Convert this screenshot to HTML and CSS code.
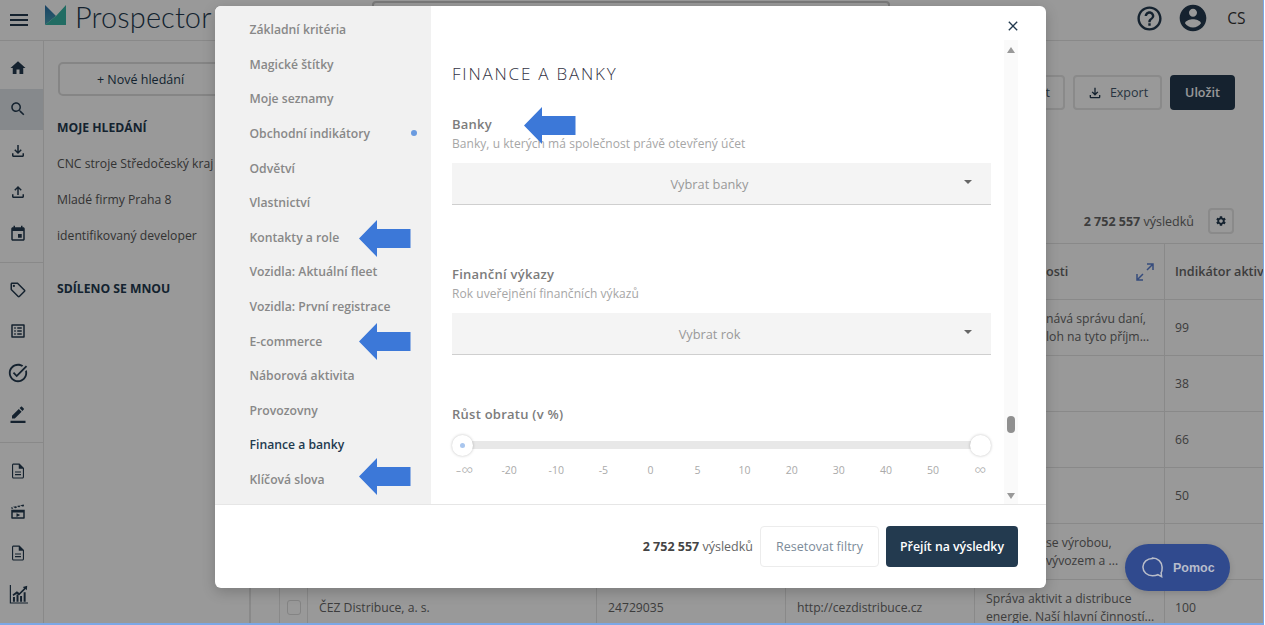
FILE: index.html
```html
<!DOCTYPE html>
<html lang="cs">
<head>
<meta charset="utf-8">
<title>Prospector</title>
<link rel="stylesheet" href="styles.css">
</head>
<body>
<div class="app">
  <header class="topbar">
    <div class="menu-cell"><svg class="ic ic-menu" viewBox="0 0 24 24"><path d="M3 18h18v-2H3v2zm0-5h18v-2H3v2zm0-7v2h18V6H3z"/></svg></div>
    <svg class="logo" viewBox="0 0 21 20"><defs><linearGradient id="lg" x1="0" y1="0" x2="0" y2="1"><stop offset="0" stop-color="#2a6fa8"/><stop offset="1" stop-color="#4aa3b5"/></linearGradient></defs><path fill="url(#lg)" d="M0 0L11 11L0 20Z"/><path fill="#37b5a5" d="M21 0V20H0L11 11Z"/></svg>
    <span class="brand">Prospector</span>
    <div class="searchbox"></div>
    <svg class="ic ic-help" viewBox="0 0 24 24"><path d="M11 18h2v-2h-2v2zm1-16C6.48 2 2 6.48 2 12s4.48 10 10 10 10-4.48 10-10S17.52 2 12 2zm0 18c-4.41 0-8-3.59-8-8s3.59-8 8-8 8 3.59 8 8-3.59 8-8 8zm0-14c-2.21 0-4 1.79-4 4h2c0-1.1.9-2 2-2s2 .9 2 2c0 2-3 1.75-3 5h2c0-2.25 3-2.5 3-5 0-2.21-1.79-4-4-4z"/></svg>
    <svg class="ic ic-user" viewBox="0 0 24 24"><path d="M12 2C6.48 2 2 6.48 2 12s4.48 10 10 10 10-4.48 10-10S17.52 2 12 2zm0 3c1.66 0 3 1.34 3 3s-1.34 3-3 3-3-1.34-3-3 1.34-3 3-3zm0 14.2c-2.5 0-4.71-1.28-6-3.22.03-1.99 4-3.08 6-3.08 1.99 0 5.97 1.09 6 3.08-1.29 1.94-3.5 3.22-6 3.22z"/></svg>
    <span class="lang">CS</span>
  </header>
  <div class="workspace">
    <nav class="rail">
      <div class="rail-group">
        <div class="rail-item"><svg class="ic" viewBox="0 0 24 24"><path d="M10 20v-6h4v6h5v-8h3L12 3 2 12h3v8z"/></svg></div>
        <div class="rail-item rail-active"><svg class="ic" viewBox="0 0 24 24"><path d="M15.5 14h-.79l-.28-.27C15.41 12.59 16 11.11 16 9.5 16 5.91 13.09 3 9.5 3S3 5.91 3 9.5 5.91 16 9.5 16c1.61 0 3.09-.59 4.23-1.57l.27.28v.79l5 4.99L20.49 19l-4.99-5zm-6 0C7.01 14 5 11.99 5 9.5S7.01 5 9.5 5 14 7.01 14 9.5 11.99 14 9.5 14z"/></svg></div>
        <div class="rail-item"><svg class="ic" viewBox="0 0 24 24"><path d="M18 15v3H6v-3H4v3c0 1.1.9 2 2 2h12c1.1 0 2-.9 2-2v-3h-2zm-1-4l-1.41-1.41L13 12.17V4h-2v8.17L8.41 9.59 7 11l5 5 5-5z"/></svg></div>
        <div class="rail-item"><svg class="ic" viewBox="0 0 24 24"><path d="M18 15v3H6v-3H4v3c0 1.1.9 2 2 2h12c1.1 0 2-.9 2-2v-3h-2zM7 9l1.41 1.41L11 7.83V16h2V7.83l2.59 2.58L17 9l-5-5-5 5z"/></svg></div>
        <div class="rail-item"><svg class="ic" viewBox="0 0 24 24"><path d="M17 12h-5v5h5v-5zM16 1v2H8V1H6v2H5c-1.11 0-1.99.9-1.99 2L3 19c0 1.1.89 2 2 2h14c1.1 0 2-.9 2-2V5c0-1.1-.9-2-2-2h-1V1h-2zm3 18H5V8h14v11z"/></svg></div>
      </div>
      <div class="rail-group">
        <div class="rail-item"><svg class="ic" viewBox="0 0 24 24"><path d="M21.41 11.58l-9-9C12.05 2.22 11.55 2 11 2H4c-1.1 0-2 .9-2 2v7c0 .55.22 1.05.59 1.42l9 9c.36.36.86.58 1.41.58s1.05-.22 1.41-.59l7-7c.37-.36.59-.86.59-1.41s-.23-1.06-.59-1.42zM13 20.01L4 11V4h7v-.01l9 8.99-7 7.02z"/><circle cx="6.5" cy="6.5" r="1.5"/></svg></div>
        <div class="rail-item"><svg class="ic" viewBox="0 0 24 24"><path d="M19 5v14H5V5h14m1.1-2H3.9c-.5 0-.9.4-.9.9v16.2c0 .4.4.9.9.9h16.2c.4 0 .9-.5.9-.9V3.9c0-.5-.5-.9-.9-.9zM11 7h6v2h-6V7zm0 4h6v2h-6v-2zm0 4h6v2h-6v-2zM7 7h2v2H7V7zm0 4h2v2H7v-2zm0 4h2v2H7v-2z"/></svg></div>
        <div class="rail-item"><svg class="ic ic-wide" viewBox="0 0 24 24"><path d="M22 5.18L10.59 16.6l-4.24-4.24 1.41-1.41 2.83 2.83 10-10L22 5.18zm-2.21 5.04c.13.57.21 1.17.21 1.78 0 4.42-3.58 8-8 8s-8-3.58-8-8 3.58-8 8-8c1.58 0 3.04.46 4.28 1.25l1.44-1.44C16.1 2.67 14.13 2 12 2 6.48 2 2 6.48 2 12s4.48 10 10 10 10-4.48 10-10c0-1.19-.22-2.33-.6-3.39l-1.61 1.61z"/></svg></div>
        <div class="rail-item"><svg class="ic" viewBox="0 0 24 24"><path d="M22 24H2v-3h20v3zM13.06 5.19l3.75 3.75L7.75 18H4v-3.75l9.06-9.06zm4.82 2.68l-3.75-3.75 1.83-1.83c.39-.39 1.02-.39 1.41 0l2.34 2.34c.39.39.39 1.02 0 1.41l-1.83 1.83z"/></svg></div>
      </div>
      <div class="rail-group rail-last">
        <div class="rail-item"><svg class="ic" viewBox="0 0 24 24"><path d="M8 16h8v1.5H8zm0-3.5h8V14H8zM14 2H6c-1.1 0-2 .9-2 2v16c0 1.1.89 2 1.99 2H18c1.1 0 2-.9 2-2V8l-6-6zm4.500 18c0 .3-.2.5-.5.5H6c-.3 0-.5-.2-.5-.5V4c0-.3.2-.5.5-.5h7V9h5.500v11z"/></svg></div>
        <div class="rail-item"><svg class="ic" viewBox="0 0 24 24"><path d="M3 9h18v11c0 .6-.4 1-1 1H4c-.6 0-1-.4-1-1V9zm2 3.500V19h14v-6.500H5zm5 1l5 2.500-5 2.500v-5zM3 5.800L19.600 2l.5 2.200-2.600.6-1.600-1.600-2.200.5 1.600 1.600-2.400.5-1.600-1.600-2.200.5 1.600 1.600-2.400.6L6.100 5.300 4 5.800l1.600 1.500L3.500 8 3 5.800z"/></svg></div>
        <div class="rail-item"><svg class="ic" viewBox="0 0 24 24"><path d="M8 16h8v1.500H8zm0-3.500h8V14H8zM14 2H6c-1.100 0-2 .9-2 2v16c0 1.100.89 2 1.990 2H18c1.100 0 2-.9 2-2V8l-6-6zm4.500 18c0 .3-.2.5-.5.5H6c-.3 0-.5-.2-.5-.5V4c0-.3.2-.5.5-.5h7V9h5.500v11z"/></svg></div>
        <div class="rail-item"><svg class="ic ic-chart" viewBox="0 0 24 24"><path d="M1 0h1.500v22H24v1.500H1zM5 15h2.500v6H5zm4.500-3H12v9H9.500zm4.500 2h2.500v7H14zm4.500-5H21v12h-2.500zM4.500 12L10 8l3 2 6-6-1.500-1.500L23 1l-.5 5.500L21 5l-8 8-3-2-4.500 3z"/></svg></div>
      </div>
    </nav>
    <aside class="panel">
      <button class="new-search">+ Nové hledání</button>
      <h3 class="panel-title">MOJE HLEDÁNÍ</h3>
      <a class="saved">CNC stroje Středočeský kraj</a>
      <a class="saved">Mladé firmy Praha 8</a>
      <a class="saved">identifikovaný developer</a>
      <h3 class="panel-title panel-title-shared">SDÍLENO SE MNOU</h3>
    </aside>
    <main class="main">
      <div class="actions">
        <button class="btn btn-import"><span class="import-tail">t</span></button>
        <button class="btn btn-export"><svg class="ic ic-btn" viewBox="0 0 24 24"><path d="M18 15v3H6v-3H4v3c0 1.1.9 2 2 2h12c1.1 0 2-.9 2-2v-3h-2zm-1-4l-1.41-1.41L13 12.17V4h-2v8.17L8.41 9.59 7 11l5 5 5-5z"/></svg>Export</button>
        <button class="btn btn-dark">Uložit</button>
      </div>
      <div class="result-row">
        <span class="count"><b>2 752 557</b> výsledků</span>
        <span class="gear"><svg class="ic ic-gear" viewBox="0 0 24 24"><path d="M19.14 12.94c.04-.3.06-.61.06-.94 0-.32-.02-.64-.07-.94l2.03-1.58c.18-.14.23-.41.12-.61l-1.92-3.32c-.12-.22-.37-.29-.59-.22l-2.39.96c-.5-.38-1.03-.7-1.62-.94l-.36-2.54c-.04-.24-.24-.41-.48-.41h-3.84c-.24 0-.43.17-.47.41l-.36 2.54c-.59.24-1.13.57-1.62.94l-2.39-.96c-.22-.08-.47 0-.59.22L2.74 8.87c-.12.21-.08.47.12.61l2.03 1.58c-.05.3-.09.63-.09.94s.02.64.07.94l-2.03 1.58c-.18.14-.23.41-.12.61l1.92 3.32c.12.22.37.29.59.22l2.39-.96c.5.38 1.03.7 1.62.94l.36 2.54c.05.24.24.41.48.41h3.84c.24 0 .44-.17.47-.41l.36-2.54c.59-.24 1.13-.56 1.62-.94l2.39.96c.22.08.47 0 .59-.22l1.92-3.32c.12-.22.07-.47-.12-.61l-2.01-1.58zM12 15.6c-1.98 0-3.6-1.62-3.6-3.6s1.62-3.6 3.6-3.6 3.6 1.62 3.6 3.6-1.62 3.6-3.6 3.6z"/></svg></span>
      </div>
      <table class="grid">
        <colgroup><col class="c0"><col class="c1"><col class="c2"><col class="c3"><col class="c4"><col class="c5"><col class="c6"></colgroup>
        <thead>
          <tr><th></th><th></th><th></th><th></th><th></th>
            <th><div class="th-flex"><span class="clipped">osti</span><svg class="ic-expand" viewBox="0 0 18 18"><path d="M11 1h6v6M17 1l-6 6M1 11v6h6M1 17l6-6" fill="none" stroke="#5b7fd0" stroke-width="1.5"/></svg></div></th>
            <th class="last-col">Indikátor aktivity</th></tr>
        </thead>
        <tbody>
          <tr><td></td><td></td><td></td><td></td><td></td><td class="td-desc"><div class="desc clipped">nává správu daní,<br>loh na tyto příjm...</div></td><td class="last-col">99</td></tr>
          <tr><td></td><td></td><td></td><td></td><td></td><td></td><td class="last-col">38</td></tr>
          <tr><td></td><td></td><td></td><td></td><td></td><td></td><td class="last-col">66</td></tr>
          <tr><td></td><td></td><td></td><td></td><td></td><td></td><td class="last-col">50</td></tr>
          <tr><td></td><td></td><td></td><td></td><td></td><td class="td-desc"><div class="desc clipped">se výrobou,<br>vývozem a ...</div></td><td class="last-col"></td></tr>
          <tr><td></td><td><span class="check"></span></td><td>ČEZ Distribuce, a. s.</td><td>24729035</td><td>http://cezdistribuce.cz</td><td class="td-desc"><div class="desc">Správa aktivit a distribuce energie. Naší hlavní činností...</div></td><td class="last-col">100</td></tr>
        </tbody>
      </table>
    </main>
  </div>
  <button class="help-chat">
    <svg class="chat-ic" viewBox="0 0 24 24"><path d="M12 2.500C6.500 2.500 2 6.300 2 11.500s4.500 9 10 9c1.700 0 4-.3 5.500-1l4 2-.5-4c1.300-1.500 1-4.500 1-6 0-5.200-4.500-9.500-10-9.500z" fill="none" stroke="#b9bdc9" stroke-width="1.600"/></svg>
    Pomoc
  </button>
  <div class="overlay"></div>
  <section class="modal">
    <div class="modal-body">
      <ul class="filters">
        <li>Základní kritéria</li>
        <li>Magické štítky</li>
        <li>Moje seznamy</li>
        <li>Obchodní indikátory<i class="dot"></i></li>
        <li>Odvětví</li>
        <li>Vlastnictví</li>
        <li>Kontakty a role</li>
        <li>Vozidla: Aktuální fleet</li>
        <li>Vozidla: První registrace</li>
        <li>E-commerce</li>
        <li>Náborová aktivita</li>
        <li>Provozovny</li>
        <li class="filter-active">Finance a banky</li>
        <li>Klíčová slova</li>
      </ul>
      <div class="pane">
        <div class="content">
          <h2 class="pane-title">FINANCE A BANKY</h2>
          <div class="field field-banks">
            <div class="label">Banky</div>
            <div class="hint">Banky, u kterých má společnost právě otevřený účet</div>
            <div class="select"><span>Vybrat banky</span><i class="caret"></i></div>
          </div>
          <div class="field field-reports">
            <div class="label">Finanční výkazy</div>
            <div class="hint">Rok uveřejnění finančních výkazů</div>
            <div class="select"><span>Vybrat rok</span><i class="caret"></i></div>
          </div>
          <div class="field field-growth">
            <div class="label">Růst obratu (v %)</div>
            <div class="slider"><span class="handle handle-from"><i></i></span><span class="handle"></span></div>
            <div class="ticks"><span class="inf inf-from">-∞</span><span>-20</span><span>-10</span><span>-5</span><span>0</span><span>5</span><span>10</span><span>20</span><span>30</span><span>40</span><span>50</span><span class="inf">∞</span></div>
          </div>
        </div>
        <div class="scrollbar"><i class="sb-up"></i><i class="sb-thumb"></i><i class="sb-down"></i></div>
      </div>
      <button class="close" aria-label="Zavřít"><svg viewBox="0 0 24 24"><path d="M19 6.41L17.59 5 12 10.59 6.41 5 5 6.41 10.59 12 5 17.59 6.41 19 12 13.41 17.59 19 19 17.59 13.41 12z"/></svg></button>
    </div>
    <footer class="modal-foot">
      <span class="foot-count"><b>2 752 557</b> výsledků</span>
      <button class="btn-reset">Resetovat filtry</button>
      <button class="btn-go">Přejít na výsledky</button>
    </footer>
  </section>
  <svg class="arrow arrow-banky" viewBox="0 0 52 37"><path d="M0 18.500L18 0V9H51.500V28H18V37Z"/></svg>
  <svg class="arrow arrow-kontakty" viewBox="0 0 52 37"><path d="M0 18.500L18 0V9H51.500V28H18V37Z"/></svg>
  <svg class="arrow arrow-ecom" viewBox="0 0 52 37"><path d="M0 18.500L18 0V9H51.500V28H18V37Z"/></svg>
  <svg class="arrow arrow-slova" viewBox="0 0 52 37"><path d="M0 18.500L18 0V9H51.500V28H18V37Z"/></svg>
</div>
</body>
</html>
```

FILE: styles.css
```css
* { box-sizing: border-box; }
html, body { margin: 0; height: 100%; background: #fff; overflow: hidden; }
body { font-family: "Open Sans", "Liberation Sans", sans-serif; color: #555; }
button { font-family: inherit; }

.app {
  position: relative;
  width: 1264px;
  height: 625px;
  overflow: hidden;
  display: flex;
  flex-direction: column;
  border-right: 1px solid #7ba7e6;
  border-bottom: 2px solid #7ba7e6;
}
.ic { width: 24px; height: 24px; fill: #233a4f; display: block; flex: none; }

/* Top bar */
.topbar {
  flex: 0 0 41px;
  display: flex;
  align-items: center;
  border-bottom: 1px solid #e4e4e4;
  padding-right: 17.500px;
}
.menu-cell { width: 45px; padding-left: 7px; flex: none; }
.logo { width: 21px; height: 20px; margin-top: -10px; flex: none; }
.brand {
  flex: 0 0 297px;
  font-family: "Lato", sans-serif;
  font-weight: 300;
  font-size: 29px;
  letter-spacing: .1px;
  color: #233a4f;
  margin-left: 9px;
  line-height: 36px;
  margin-top: -7px;
}
.searchbox {
  flex: 0 0 518px;
  height: 30px;
  align-self: flex-start;
  margin-top: 1px;
  border: 2px solid #ccc;
  border-radius: 4px;
}
.ic-help { width: 29px; height: 29px; margin-left: auto; margin-top: -4px; }
.ic-user { width: 32px; height: 32px; margin-left: 13px; margin-top: -4px; }
.lang { margin-left: 18.500px; font-size: 15.500px; color: #333; margin-top: -4px; }

/* Layout */
.workspace { flex: 1; display: flex; min-height: 0; }
.rail { flex: 0 0 44px; border-right: 1px solid #e4e4e4; padding-top: 6.300px; }
.rail-group { border-bottom: 1px solid #e4e4e4; padding-bottom: 7.500px; margin-bottom: 6.500px; }
.rail-last { border-bottom: 0; }
.rail-item { height: 41.400px; display: flex; align-items: center; justify-content: center; padding-right: 7px; }
.rail-item .ic { width: 18px; height: 18px; }
.rail-item .ic-wide { width: 22px; height: 22px; }
.rail-item .ic-chart { width: 19px; height: 19px; }
.rail-active { background: #dfe5ea; }

.panel { flex: 0 0 206px; min-width: 0; border-right: 1px solid #e4e4e4; padding: 21px 14px 0 13px; display: flex; flex-direction: column; align-items: flex-start; }
.new-search {
  width: 165px; height: 34px; flex: none; margin-left: 1px;
  background: #fff; border: 2px solid #dedede; border-radius: 5px;
  font-size: 12.500px; color: #233a4f;
  padding: 0;
}
.panel-title { margin: 23px 0 18px; font-size: 12.200px; font-weight: 700; color: #233a4f; line-height: 18px; white-space: nowrap; }
.panel-title-shared { margin-top: 16px; }
.saved { font-size: 12.200px; line-height: 18px; color: #555; margin-bottom: 18.200px; white-space: nowrap; }

.main { flex: 1; min-width: 0; overflow: hidden; padding-top: 34px; }
.actions { display: flex; justify-content: flex-end; gap: 8px; padding-right: 28px; height: 35px; }
.btn {
  height: 35px; padding: 0; display: flex; align-items: center; justify-content: center; gap: 7px;
  background: #fff; border: 2px solid #e6e6e6; border-radius: 4px;
  font-size: 12.500px; font-weight: 500; color: #44586b;
}
.btn-import { width: 70px; justify-content: flex-end; padding-right: 13px; }
.btn-export { width: 89px; }
.btn-dark { width: 65px; background: #233a4f; border-color: #233a4f; color: #fff; font-weight: 600; }
.ic-btn { width: 16px; height: 16px; }
.result-row { display: flex; justify-content: flex-end; align-items: center; height: 26px; margin-top: 98px; padding-right: 29px; }
.count { font-size: 12.500px; color: #666; margin-right: 14px; }
.count b { font-weight: 700; }
.gear { width: 26px; height: 26px; border: 2px solid #e6e6e6; border-radius: 4px; display: flex; align-items: center; justify-content: center; }
.ic-gear { width: 12px; height: 12px; }

.grid { table-layout: fixed; width: 1064px; border-collapse: collapse; margin-top: 9px; font-size: 12.200px; color: #666; }
.c0 { width: 29px; } .c1 { width: 28px; } .c2 { width: 289px; } .c3 { width: 189px; } .c4 { width: 189px; } .c5 { width: 190px; } .c6 { width: 150px; }
.grid th, .grid td { border: 1px solid #e4e4e4; padding: 0 11px; text-align: left; vertical-align: middle; white-space: nowrap; overflow: hidden; }
.grid thead tr { height: 56px; }
.grid tbody tr { height: 56px; }
.grid th { font-weight: 600; font-size: 12.600px; color: #666; }
.grid .td-desc { padding-right: 4px; }
.grid .last-col { padding-left: 10px; }
.th-flex { display: flex; justify-content: space-between; align-items: center; }
.ic-expand { width: 18px; height: 18px; margin-right: -1px; }
.desc { white-space: normal; line-height: 18px; }
.clipped { padding-left: 60px; }
.check { display: block; width: 14px; height: 15px; border: 1px solid #dcdcdc; border-radius: 3px; margin-left: -4px; }

.help-chat {
  position: absolute; left: 1125px; top: 544px; width: 105px; height: 47px; z-index: 2;
  border: 0; border-radius: 24px; background: #304a8e; color: #b7bccb;
  font-family: "Liberation Sans", sans-serif; font-weight: 700; font-size: 12.500px;
  display: flex; align-items: center; gap: 9px; padding-left: 16px;
  box-shadow: 0 2px 6px rgba(0,0,0,.15);
}
.chat-ic { width: 23px; height: 23px; flex: none; }

.overlay { position: absolute; inset: 0; background: rgba(0,0,0,.4); z-index: 1; }

/* Modal */
.modal {
  position: absolute; left: 215px; top: 6px; width: 831px; height: 582px; z-index: 3;
  background: #fff; border-radius: 6px; overflow: hidden;
  display: flex; flex-direction: column;
  box-shadow: 0 4px 14px rgba(0,0,0,.2);
}
.modal-body { position: relative; flex: 0 0 499px; display: flex; border-bottom: 1px solid #e6e6e6; }
.filters { list-style: none; margin: 0; padding: 6.400px 14px 0 34.500px; flex: 0 0 216px; background: #f1f1f1; }
.filters li {
  height: 34.600px; display: flex; align-items: center; justify-content: space-between;
  font-size: 12.200px; font-weight: 600; color: #888; white-space: nowrap;
}
.filters .filter-active { color: #233a4f; }
.dot { width: 6px; height: 6px; border-radius: 50%; background: #6a9be0; }

.pane { flex: 1; display: flex; min-width: 0; padding-right: 28px; }
.content { flex: 1; min-width: 0; padding: 0 13px 0 21px; }
.pane-title { margin: 57px 0 0; font-size: 17px; line-height: 22px; font-weight: 300; letter-spacing: 1.800px; color: #334; }
.label { font-size: 13px; font-weight: 600; line-height: 18px; color: #7c7c7c; letter-spacing: .25px; }
.hint { font-size: 12px; line-height: 16px; color: #a6a6a6; margin-top: 3px; letter-spacing: .05px; }
.field-banks { margin-top: 30px; }
.field-reports { margin-top: 60px; }
.field-growth { margin-top: 50px; }
.select {
  height: 42px; margin-top: 11px; padding-right: 24px; background: #f4f4f4; border-bottom: 1px solid #cfcfcf;
  display: flex; align-items: center; justify-content: center; position: relative;
  font-size: 12.800px; color: #999;
}
.caret { position: absolute; right: 19px; top: 17px; border: 4px solid transparent; border-top: 4px solid #666; border-bottom: 0; }

.slider {
  height: 8px; margin: 18px 10px 0; background: #e8e8e8;
  display: flex; justify-content: space-between; align-items: center;
}
.handle {
  width: 21px; height: 21px; margin: 0 -10px; border-radius: 50%; background: #fff; flex: none;
  box-shadow: 0 0 3px rgba(0,0,0,.25);
  display: flex; align-items: center; justify-content: center;
}
.handle-from i { width: 5px; height: 5px; border-radius: 50%; background: #a9c6ee; }
.ticks { display: grid; grid-template-columns: repeat(12, 47.100px); margin: 14px 0 0 -13.500px; font-size: 10.500px; line-height: 14px; color: #aaa; text-align: center; }
.ticks .inf { font-size: 17px; font-weight: 300; line-height: 14px; }
.ticks .inf-from { padding-left: 5px; }

.scrollbar { flex: 0 0 14px; margin-top: 34px; background: #fafafa; position: relative; }
.sb-up { position: absolute; left: 3px; top: 7px; border: 4px solid transparent; border-bottom: 6px solid #999; border-top: 0; }
.sb-down { position: absolute; left: 3px; bottom: 5px; border: 4px solid transparent; border-top: 6px solid #999; border-bottom: 0; }
.sb-thumb { position: absolute; left: 3px; top: 376px; width: 8px; height: 17px; border-radius: 4px; background: #909090; }
.close { position: absolute; right: 21px; top: 8px; width: 24px; height: 24px; padding: 4px; border: 0; background: none; }
.close svg { display: block; width: 16px; height: 16px; fill: #233a4f; }

.modal-foot { flex: 1; display: flex; justify-content: flex-end; align-items: center; padding: 0 28px 0 0; }
.foot-count { font-size: 12.500px; color: #666; margin-right: 7px; }
.foot-count b { font-weight: 700; color: #444; }
.btn-reset { width: 119px; height: 41px; background: #fff; border: 1px solid #ececec; border-radius: 4px; font-size: 12.500px; color: #7c8b99; }
.btn-go { width: 132px; height: 41px; margin-left: 7px; background: #233a4f; border: 0; border-radius: 4px; font-size: 12.300px; font-weight: 600; color: #fff; }

/* Annotation arrows drawn over the screenshot */
.arrow { position: absolute; width: 52px; height: 37px; fill: #3c78d8; z-index: 4; }
.arrow-banky { left: 524px; top: 107px; }
.arrow-kontakty { left: 359px; top: 220px; }
.arrow-ecom { left: 359px; top: 323px; }
.arrow-slova { left: 359px; top: 458px; }
```
